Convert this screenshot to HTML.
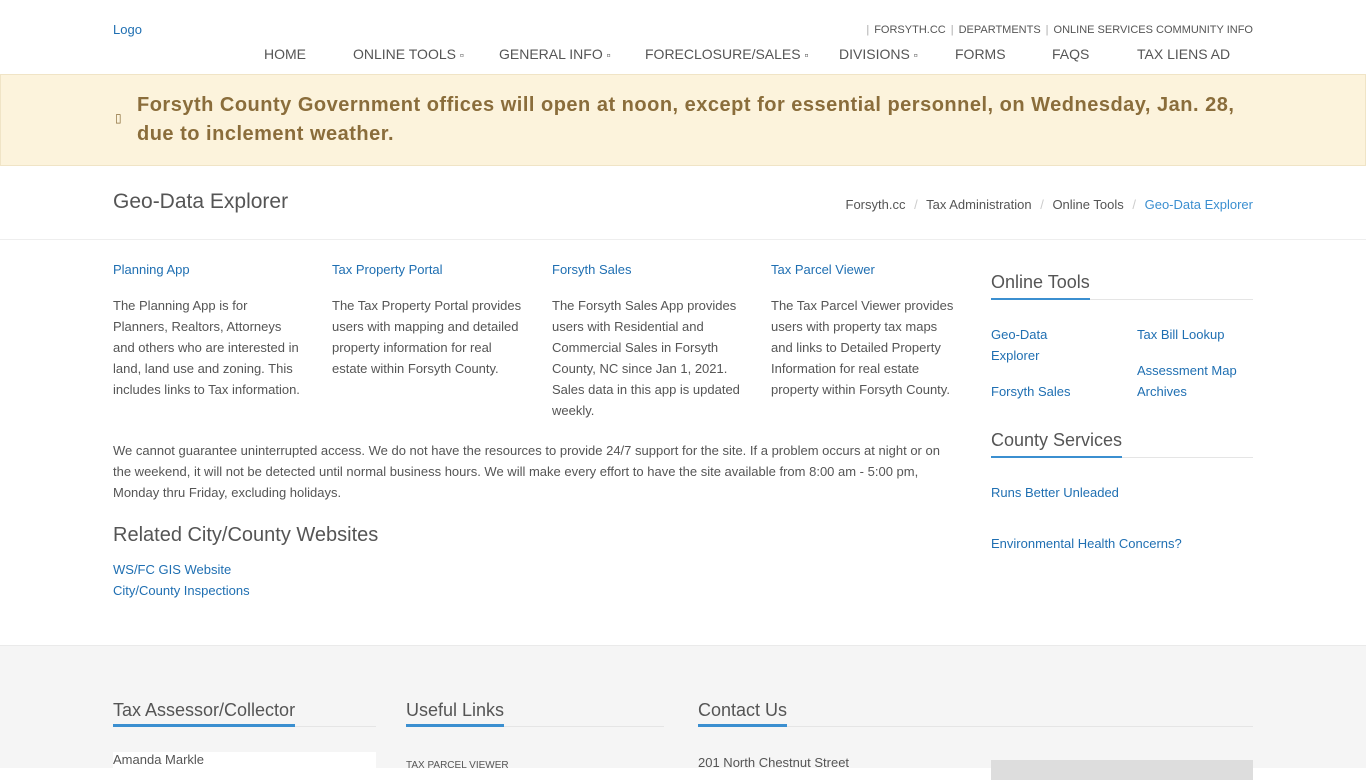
<!DOCTYPE html>
<html><head><meta charset="utf-8"><style>
*{margin:0;padding:0;box-sizing:border-box}
html,body{width:1366px;height:768px;overflow:hidden}
body{font-family:"Liberation Sans",Arial,sans-serif;color:#555;background:#fff;font-size:13px}
a{color:#1f6fb2;text-decoration:none}
.abs{position:absolute}
.top{position:absolute;top:24px;right:113px;font-size:11px;color:#555}
.top span{color:#aaa;margin:0 5px}
.nav{position:absolute;top:46px;font-size:14px;color:#555}
.nav div{position:absolute;white-space:nowrap}
.alert{position:absolute;top:74px;left:0;width:1366px;height:92px;background:#fcf3dc;border:1px solid #f0e4c6}
.alert p{position:absolute;left:136px;top:16px;width:1120px;font-size:20px;font-weight:bold;color:#8a6d3b;line-height:29px;letter-spacing:0.5px}
.crumb{position:absolute;top:166px;left:0;width:1366px;height:74px;border-bottom:1px solid #eee}
.col p{font-size:13px;line-height:21px;color:#555}
h3{font-weight:normal;color:#555}
.side h3{font-size:18px;padding-bottom:5px;display:inline-block;border-bottom:2px solid #3b8fd0}
.foot{position:absolute;top:645px;left:0;width:1366px;height:123px;background:#f5f5f5;border-top:1px solid #eaeaea}
.foot h3{position:absolute;top:54px;font-size:18px;padding-bottom:3px;border-bottom:3px solid #3b8fd0}
.fl{position:absolute;top:80px;height:1px;background:#e5e5e5}
</style></head><body>
<a class="abs" style="left:113px;top:22px;font-size:13px">Logo</a>
<div class="top"><span>|</span>FORSYTH.CC<span>|</span>DEPARTMENTS<span>|</span>ONLINE SERVICES COMMUNITY INFO</div>
<div class="nav">
<div style="left:264px">HOME</div>
<div style="left:353px">ONLINE TOOLS <small>▫</small></div>
<div style="left:499px">GENERAL INFO <small>▫</small></div>
<div style="left:645px">FORECLOSURE/SALES <small>▫</small></div>
<div style="left:839px">DIVISIONS <small>▫</small></div>
<div style="left:955px">FORMS</div>
<div style="left:1052px">FAQS</div>
<div style="left:1137px">TAX LIENS AD</div>
</div>
<div class="alert"><span class="abs" style="left:114px;top:36px;font-size:12px;color:#8a6d3b">▯</span><p>Forsyth County Government offices will open at noon, except for essential personnel, on Wednesday, Jan. 28,<br>due to inclement weather.</p></div>
<div class="crumb">
<div class="abs" style="left:113px;top:24px;font-size:21px;color:#555">Geo-Data Explorer</div>
<div class="abs" style="right:113px;top:31px;font-size:13px;color:#555">Forsyth.cc <span style="color:#ccc;margin:0 5px">/</span> Tax Administration <span style="color:#ccc;margin:0 5px">/</span> Online Tools <span style="color:#ccc;margin:0 5px">/</span> <a style="color:#3b8fd0">Geo-Data Explorer</a></div>
</div>
<div class="col abs" style="left:113px;top:262px;width:190px"><a>Planning App</a><p style="margin-top:18px">The Planning App is for Planners, Realtors, Attorneys and others who are interested in land, land use and zoning. This includes links to Tax information.</p></div>
<div class="col abs" style="left:332px;top:262px;width:195px"><a>Tax Property Portal</a><p style="margin-top:18px">The Tax Property Portal provides users with mapping and detailed property information for real estate within Forsyth County.</p></div>
<div class="col abs" style="left:552px;top:262px;width:195px"><a>Forsyth Sales</a><p style="margin-top:18px">The Forsyth Sales App provides users with Residential and Commercial Sales in Forsyth County, NC since Jan 1, 2021. Sales data in this app is updated weekly.</p></div>
<div class="col abs" style="left:771px;top:262px;width:190px"><a>Tax Parcel Viewer</a><p style="margin-top:18px">The Tax Parcel Viewer provides users with property tax maps and links to Detailed Property Information for real estate property within Forsyth County.</p></div>
<div class="col abs" style="left:113px;top:440px;width:840px"><p>We cannot guarantee uninterrupted access. We do not have the resources to provide 24/7 support for the site. If a problem occurs at night or on the weekend, it will not be detected until normal business hours. We will make every effort to have the site available from 8:00 am - 5:00 pm, Monday thru Friday, excluding holidays.</p></div>
<h3 class="abs" style="left:113px;top:524px;font-size:20px">Related City/County Websites</h3>
<div class="abs" style="left:113px;top:559px;line-height:21px"><a>WS/FC GIS Website</a><br><a>City/County Inspections</a></div>
<div class="side abs" style="left:991px;top:272px;width:262px">
<div style="border-bottom:1px solid #e5e5e5"><h3 style="margin-bottom:-1px">Online Tools</h3></div>
</div>
<div class="abs" style="left:991px;top:324px;width:100px;line-height:21px"><a>Geo-Data Explorer</a></div>
<div class="abs" style="left:991px;top:381px;line-height:21px"><a>Forsyth Sales</a></div>
<div class="abs" style="left:1137px;top:324px;line-height:21px"><a>Tax Bill Lookup</a></div>
<div class="abs" style="left:1137px;top:360px;width:120px;line-height:21px"><a>Assessment Map Archives</a></div>
<div class="side abs" style="left:991px;top:430px;width:262px">
<div style="border-bottom:1px solid #e5e5e5"><h3 style="margin-bottom:-1px">County Services</h3></div>
</div>
<div class="abs" style="left:991px;top:482px;line-height:21px"><a>Runs Better Unleaded</a></div>
<div class="abs" style="left:991px;top:533px;line-height:21px"><a>Environmental Health Concerns?</a></div>
<div class="foot">
<div class="fl" style="left:113px;width:263px"></div>
<div class="fl" style="left:406px;width:258px"></div>
<div class="fl" style="left:698px;width:555px"></div>
<h3 style="left:113px">Tax Assessor/Collector</h3>
<h3 style="left:406px">Useful Links</h3>
<h3 style="left:698px">Contact Us</h3>
<div class="abs" style="left:113px;top:106px;width:263px;height:20px;background:#fff;font-size:13px;color:#555">Amanda Markle</div>
<div class="abs" style="left:406px;top:114px;font-size:10px;color:#555">TAX PARCEL VIEWER</div>
<div class="abs" style="left:698px;top:109px;font-size:13px;color:#555">201 North Chestnut Street</div>
<div class="abs" style="left:991px;top:114px;width:262px;height:20px;background:#ddd"></div>
</div>
</body></html>
